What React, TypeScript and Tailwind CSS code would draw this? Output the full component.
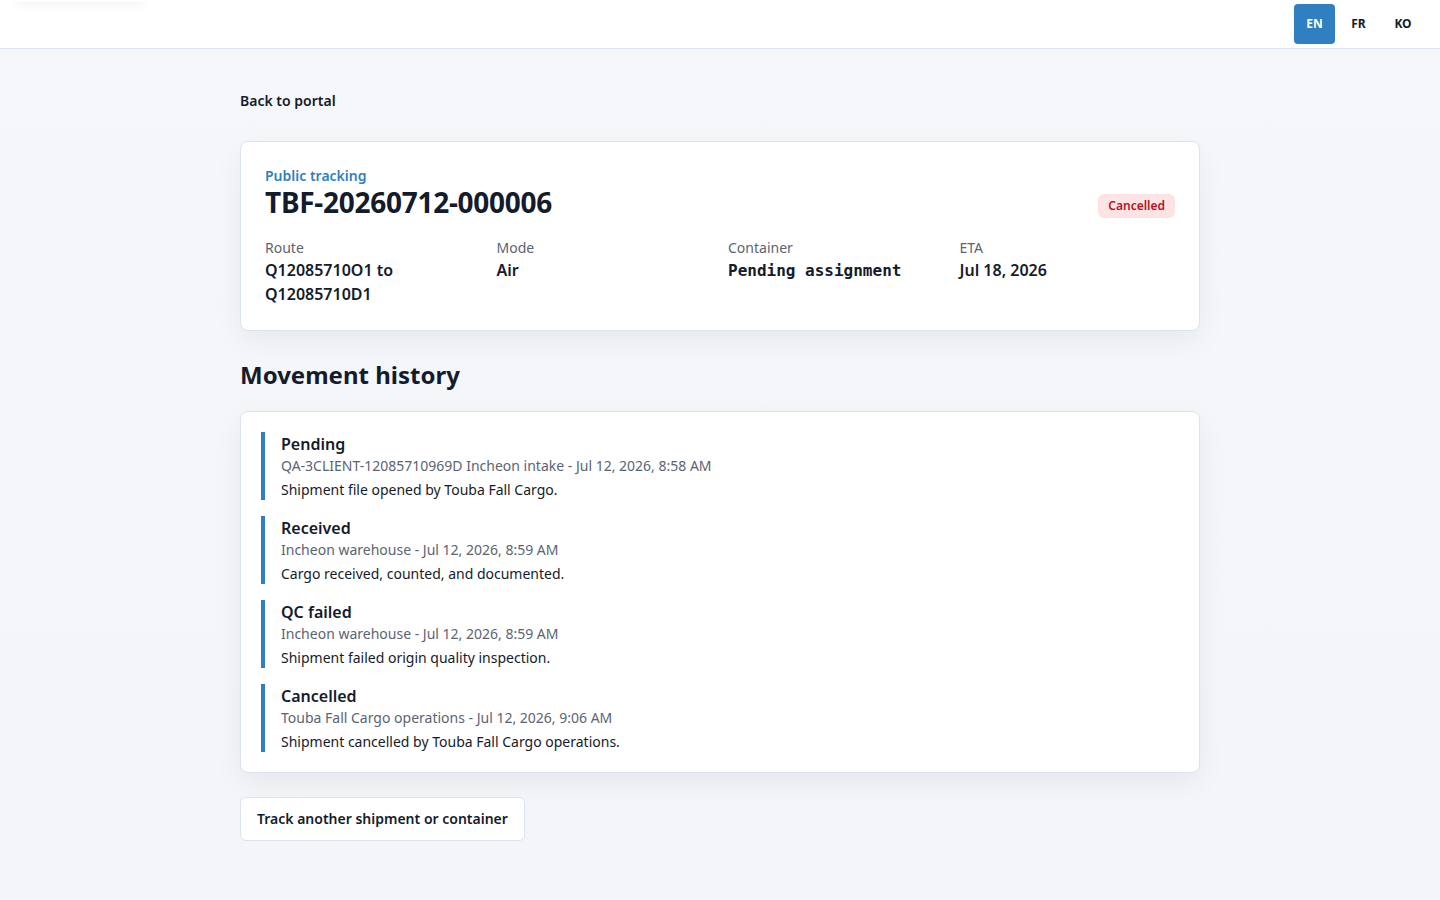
import { ReactNode } from "react";

const events = [
    { title: "Pending", meta: "QA-3CLIENT-12085710969D Incheon intake - Jul 12, 2026, 8:58 AM", note: "Shipment file opened by Touba Fall Cargo." },
    { title: "Received", meta: "Incheon warehouse - Jul 12, 2026, 8:59 AM", note: "Cargo received, counted, and documented." },
    { title: "QC failed", meta: "Incheon warehouse - Jul 12, 2026, 8:59 AM", note: "Shipment failed origin quality inspection." },
    { title: "Cancelled", meta: "Touba Fall Cargo operations - Jul 12, 2026, 9:06 AM", note: "Shipment cancelled by Touba Fall Cargo operations." },
];

function Field({ label, children }: { label: string; children: ReactNode }) {
    return (
        <div className="flex flex-col">
            <span className="text-sm leading-5 text-[#5b6472]">{label}</span>
            <span className="text-base leading-6 font-semibold text-[#141b2b]">{children}</span>
        </div>
    );
}

export default function App() {
    return (
        <div className="min-h-screen bg-gradient-to-b from-[#f5f7fa] to-[#f3f5f9] text-[#141b2b]" style={{ fontFamily: '"Noto Sans", "Open Sans", sans-serif' }}>
            <header className="h-[49px] bg-white border-b border-[#dbe3ee] flex items-center justify-between pr-[16px]">
                <div className="w-[130px] h-1 -mt-12 shadow-[0_2px_8px_rgba(15,23,42,0.08)] ml-4"></div>
                <div className="flex items-center gap-[3px]">
                    <button className="w-[41px] h-[40px] rounded bg-[#2f7fc1] text-white text-xs font-bold">EN</button>
                    <button className="w-[41px] h-[40px] rounded text-[#141b2b] text-xs font-bold">FR</button>
                    <button className="w-[42px] h-[40px] rounded text-[#141b2b] text-xs font-bold">KO</button>
                </div>
            </header>

            <main className="w-[960px] mx-auto pt-[40px] pb-14">
                <a className="block text-sm leading-6 font-semibold text-[#141b2b]">Back to portal</a>

                <section className="mt-[28px] bg-white border border-[#dbe3ee] rounded-lg shadow-[0_10px_30px_rgba(15,23,42,0.06)] px-6 pt-[24px] pb-[24px]">
                    <div className="flex items-end justify-between">
                        <div>
                            <div className="text-sm leading-5 font-semibold text-[#2f7fc1]">Public tracking</div>
                            <h1 className="text-[28px] leading-[32px] font-bold tracking-[-0.01em]">TBF-20260712-000006</h1>
                        </div>
                        <span className="px-2.5 py-[3px] rounded-md bg-[#fde3e3] text-[#b3141c] text-xs leading-[18px] font-semibold">Cancelled</span>
                    </div>
                    <div className="mt-[20px] grid grid-cols-4 gap-4">
                        <Field label="Route">Q12085710O1 to Q12085710D1</Field>
                        <Field label="Mode">Air</Field>
                        <Field label="Container"><span style={{ fontFamily: '"DejaVu Sans Mono", monospace' }} className="font-semibold text-base">Pending assignment</span></Field>
                        <Field label="ETA">Jul 18, 2026</Field>
                    </div>
                </section>

                <h2 className="mt-[28px] text-2xl leading-8 font-bold">Movement history</h2>

                <section className="mt-5 bg-white border border-[#dbe3ee] rounded-lg shadow-[0_10px_30px_rgba(15,23,42,0.06)] p-5 flex flex-col gap-4">
                    {events.map((e) => (
                        <div key={e.title} className="border-l-4 border-[#2f7fc1] pl-4">
                            <div className="text-base leading-6 font-semibold">{e.title}</div>
                            <div className="text-sm leading-5 text-[#5b6472]">{e.meta}</div>
                            <div className="mt-1 text-sm leading-5">{e.note}</div>
                        </div>
                    ))}
                </section>

                <button className="mt-6 h-11 px-4 bg-white border border-[#dbe3ee] rounded-md text-sm font-semibold text-[#141b2b]">Track another shipment or container</button>
            </main>
        </div>
    );
}
